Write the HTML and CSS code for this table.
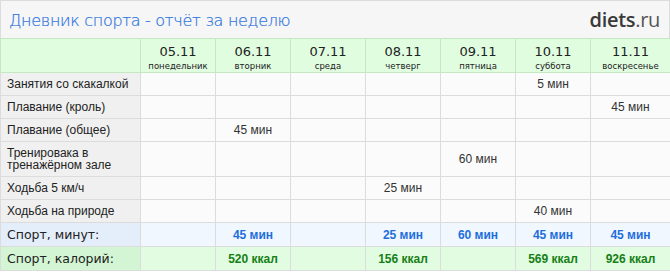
FILE: index.html
```html
<!DOCTYPE html>
<html lang="ru">
<head>
<meta charset="utf-8">
<link rel="stylesheet" href="styles.css">
</head>
<body>
<div class="page">
  <div class="head">
    <div class="title">Дневник спорта - отчёт за неделю</div>
    <div class="logo"><b>diets</b>.ru</div>
  </div>
  <table class="grid">
    <colgroup>
      <col class="c-label"><col class="c-day"><col class="c-day"><col class="c-day"><col class="c-day"><col class="c-day"><col class="c-day"><col class="c-last">
    </colgroup>
    <thead>
      <tr class="days">
        <th></th>
        <th><span class="d">05.11</span><span class="w">понедельник</span></th>
        <th><span class="d">06.11</span><span class="w">вторник</span></th>
        <th><span class="d">07.11</span><span class="w">среда</span></th>
        <th><span class="d">08.11</span><span class="w">четверг</span></th>
        <th><span class="d">09.11</span><span class="w">пятница</span></th>
        <th><span class="d">10.11</span><span class="w">суббота</span></th>
        <th><span class="d">11.11</span><span class="w">воскресенье</span></th>
      </tr>
    </thead>
    <tbody>
      <tr class="r"><td class="lbl">Занятия со скакалкой</td><td></td><td></td><td></td><td></td><td></td><td>5 мин</td><td></td></tr>
      <tr class="r"><td class="lbl">Плавание (кроль)</td><td></td><td></td><td></td><td></td><td></td><td></td><td>45 мин</td></tr>
      <tr class="r"><td class="lbl">Плавание (общее)</td><td></td><td>45 мин</td><td></td><td></td><td></td><td></td><td></td></tr>
      <tr class="r tall"><td class="lbl">Тренировака в тренажёрном зале</td><td></td><td></td><td></td><td></td><td>60 мин</td><td></td><td></td></tr>
      <tr class="r"><td class="lbl">Ходьба 5 км/ч</td><td></td><td></td><td></td><td>25 мин</td><td></td><td></td><td></td></tr>
      <tr class="r"><td class="lbl">Ходьба на природе</td><td></td><td></td><td></td><td></td><td></td><td>40 мин</td><td></td></tr>
      <tr class="sum min"><td class="lbl">Спорт, минут:</td><td></td><td>45 мин</td><td></td><td>25 мин</td><td>60 мин</td><td>45 мин</td><td>45 мин</td></tr>
      <tr class="sum kcal"><td class="lbl">Спорт, калорий:</td><td></td><td>520 ккал</td><td></td><td>156 ккал</td><td></td><td>569 ккал</td><td>926 ккал</td></tr>
    </tbody>
  </table>
</div>
</body>
</html>
```
FILE: styles.css
```css
html, body { margin: 0; padding: 0; background: #fff; }
.page { width: 670px; }
.head {
  box-sizing: border-box;
  height: 38px;
  border: 1px solid #dcdcdc;
  border-bottom: none;
  background: #f6f6f6;
  display: flex;
  align-items: center;
  justify-content: space-between;
  padding: 0 9px 0 8px;
}
.title {
  font-family: "DejaVu Sans", sans-serif;
  font-weight: 200;
  font-size: 16px;
  letter-spacing: -0.3px;
  color: #2f74e0;
  margin-top: 1px;
  -webkit-text-stroke: 0.2px #2f74e0;
}
.logo {
  font-family: "Open Sans", sans-serif;
  font-size: 20px;
  color: #555;
  letter-spacing: -0.3px;
}
.logo b { color: #3a3a3a; font-weight: 600; }
.grid {
  width: 670px;
  border-collapse: collapse;
  table-layout: fixed;
  font-family: "Liberation Sans", Arial, sans-serif;
  font-size: 12px;
  color: #333;
}
.c-label { width: 140px; }
.c-day { width: 75px; }
.c-last { width: 80px; }
.grid td, .grid th {
  border: 1px solid #dcdcdc;
  padding: 0;
  text-align: center;
  background: #fbfbfb;
}
.days th {
  height: 28px;
  background: #e0fde0;
  border-color: #c4e8c4;
  font-weight: normal;
  color: #222;
  font-family: "DejaVu Sans", sans-serif;
  vertical-align: top;
  padding-top: 5px;
}
.days .d { display: block; font-size: 13px; line-height: 16px; }
.days .w { display: block; font-size: 8.5px; line-height: 11px; margin-top: 1px; }
.r td { height: 22px; }
.r.tall td { height: 34px; }
.grid td.lbl {
  text-align: left;
  padding-left: 6px;
  background: #f0f0f0;
  color: #222;
  line-height: 12px;
}
.sum td { height: 23px; font-weight: bold; }
.sum td.lbl {
  font-family: "DejaVu Sans", sans-serif;
  font-weight: normal;
  font-size: 12.5px;
}
.min td { background: #f0f7ff; color: #1e6fdc; }
.min td.lbl { background: #e4eefa; }
.kcal td { background: #e2fce2; color: #168016; }
.kcal td.lbl { background: #d3f5d3; }
```
